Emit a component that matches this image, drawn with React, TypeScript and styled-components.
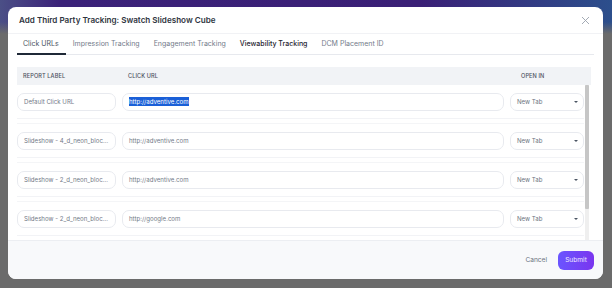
import styled, { createGlobalStyle } from "styled-components";

const GlobalStyle = createGlobalStyle`
  html, body {
    margin: 0;
    padding: 0;
  }
  body {
    font-family: Inter, "Noto Sans", sans-serif;
    -webkit-font-smoothing: antialiased;
  }
`;

const Backdrop = styled.div`
  width: 612px;
  height: 288px;
  box-sizing: border-box;
  padding: 7px 9px 9px 8px;
  background:
    linear-gradient(180deg, rgba(0, 0, 0, 0) 0px, rgba(0, 0, 0, 0) 22px, #6b6b6b 34px),
    linear-gradient(90deg, #4b4f86 0px, #3b2279 60px, #3a1f76 420px, #2c4f8c 612px);
  overflow: hidden;
`;

const Modal = styled.div`
  height: 100%;
  background: #ffffff;
  border-radius: 8px;
  display: flex;
  flex-direction: column;
  overflow: hidden;
`;

const Header = styled.div`
  height: 27px;
  flex: none;
  display: flex;
  align-items: center;
  justify-content: space-between;
  padding: 0 13px 0 11px;
  border-bottom: 1px solid #f1f2f5;
  box-sizing: border-box;
`;

const Title = styled.h1`
  margin: 0;
  font-size: 8.1px;
  font-weight: 600;
  color: #2e3440;
`;

const CloseButton = styled.button`
  border: 0;
  background: none;
  padding: 0;
  width: 9px;
  height: 9px;
  display: flex;
  cursor: pointer;
`;

const Body = styled.div`
  flex: 1;
  min-height: 0;
  display: flex;
  flex-direction: column;
  padding: 0 9px;
`;

const Tabs = styled.div`
  display: flex;
  height: 20px;
  border-bottom: 1px solid #e7e9ee;
  flex: none;
`;

const Tab = styled.div<{ $active?: boolean; $strong?: boolean }>`
  display: flex;
  align-items: center;
  padding: 0 7px 0 6px;
  margin-right: 1px;
  font-size: 7px;
  font-weight: ${(p) => (p.$strong ? 550 : 400)};
  color: ${(p) => (p.$strong ? "#1f2430" : p.$active ? "#4b5563" : "#737b8a")};
  border-bottom: 2px solid ${(p) => (p.$active ? "#1f2937" : "transparent")};
  margin-bottom: -1px;
`;

const Table = styled.div`
  margin-top: 12px;
  flex: 1;
  min-height: 0;
  display: flex;
  flex-direction: column;
  width: 574px;
`;

const HeadRow = styled.div`
  display: grid;
  grid-template-columns: 99px 382px 74px;
  column-gap: 6px;
  height: 18px;
  align-items: center;
  background: #f1f3f6;
  flex: none;
`;

const HeadCell = styled.div<{ $pad?: number }>`
  padding-left: ${(p) => p.$pad ?? 6}px;
  font-size: 5.6px;
  font-weight: 500;
  letter-spacing: 0.1px;
  text-transform: uppercase;
  color: #4b5160;
`;

const ScrollFrame = styled.div`
  flex: 1;
  min-height: 0;
  width: 572px;
  display: flex;
  gap: 1px;
`;

const RowList = styled.div`
  flex: 1;
  min-width: 0;
  overflow: hidden;
`;

const ScrollTrack = styled.div`
  width: 4px;
  flex: none;
  background: #efefef;
`;

const ScrollThumb = styled.div`
  width: 100%;
  background: #c6c6c6;
  border-radius: 1px;
`;

const Row = styled.div`
  display: grid;
  grid-template-columns: 99px 382px 74px;
  column-gap: 6px;
  padding: 8px 0 7px;
  border-bottom: 1px solid #f2f3f6;
`;

const Spacer = styled.div`
  height: 4px;
  border-bottom: 1px solid #f4f5f7;
`;

const Field = styled.div`
  height: 18px;
  box-sizing: border-box;
  border: 1px solid #e8eaef;
  border-radius: 7px;
  padding: 0 6px;
  line-height: 16px;
  font-size: 6.1px;
  color: #737a88;
  white-space: nowrap;
  overflow: hidden;
  text-overflow: ellipsis;
`;

const Selected = styled.span`
  background: #1a5fd7;
  color: #ffffff;
  padding: 1px 0;
`;

const Select = styled(Field)`
  display: flex;
  align-items: center;
  justify-content: space-between;
  color: #6b7280;
  padding-right: 5px;
`;

const Caret = styled.span`
  width: 0;
  height: 0;
  border-left: 2px solid transparent;
  border-right: 2px solid transparent;
  border-top: 2px solid #4b5563;
`;

const Footer = styled.div`
  height: 39px;
  flex: none;
  background: #f8f9fb;
  border-top: 1px solid #eceef2;
  box-sizing: border-box;
  display: flex;
  align-items: center;
  justify-content: flex-end;
  gap: 11px;
  padding: 0 9px 0 0;
`;

const CancelButton = styled.button`
  border: 0;
  background: none;
  font-family: inherit;
  font-size: 6.6px;
  color: #6b7280;
  padding: 0;
`;

const SubmitButton = styled.button`
  border: 0;
  width: 36px;
  height: 19px;
  border-radius: 6px;
  background: linear-gradient(90deg, #6a55ff, #7a35ef);
  color: #eeeaff;
  font-family: inherit;
  font-size: 6.6px;
  font-weight: 400;
  padding: 0;
`;

const rows = [
  { label: "Default Click URL", url: "http://adventive.com", selected: true },
  { label: "Slideshow - 4_d_neon_blocks_swatch", url: "http://adventive.com" },
  { label: "Slideshow - 2_d_neon_blocks_swatch", url: "http://adventive.com" },
  { label: "Slideshow - 2_d_neon_blocks_swatch", url: "http://google.com" },
  { label: "Slideshow - 3_d_neon_blocks_swatch", url: "http://adventive.com" },
];

const tabs = [
  "Click URLs",
  "Impression Tracking",
  "Engagement Tracking",
  "Viewability Tracking",
  "DCM Placement ID",
];

// visible part of the list vs. full content height
const visibleRatio = 156 / (rows.length * 39);

export default function App() {
  return (
    <>
      <GlobalStyle />
      <Backdrop>
        <Modal>
          <Header>
            <Title>Add Third Party Tracking: Swatch Slideshow Cube</Title>
            <CloseButton aria-label="Close">
              <svg width="9" height="9" viewBox="0 0 9 9">
                <path d="M1 1L8 8M8 1L1 8" stroke="#9aa1ad" strokeWidth="0.9" />
              </svg>
            </CloseButton>
          </Header>
          <Body>
            <Tabs>
              {tabs.map((t, i) => (
                <Tab key={t} $active={i === 0} $strong={i === 3}>
                  {t}
                </Tab>
              ))}
            </Tabs>
            <Table>
              <HeadRow>
                <HeadCell>Report Label</HeadCell>
                <HeadCell>Click URL</HeadCell>
                <HeadCell $pad={11}>Open In</HeadCell>
              </HeadRow>
              <ScrollFrame>
                <RowList>
                  {rows.map((r, i) => (
                    <div key={i}>
                      <Row>
                        <Field>{r.label}</Field>
                        <Field>{r.selected ? <Selected>{r.url}</Selected> : r.url}</Field>
                        <Select>
                          New Tab
                          <Caret />
                        </Select>
                      </Row>
                      <Spacer />
                    </div>
                  ))}
                </RowList>
                <ScrollTrack>
                  <ScrollThumb style={{ height: `${visibleRatio * 100}%` }} />
                </ScrollTrack>
              </ScrollFrame>
            </Table>
          </Body>
          <Footer>
            <CancelButton>Cancel</CancelButton>
            <SubmitButton>Submit</SubmitButton>
          </Footer>
        </Modal>
      </Backdrop>
    </>
  );
}
